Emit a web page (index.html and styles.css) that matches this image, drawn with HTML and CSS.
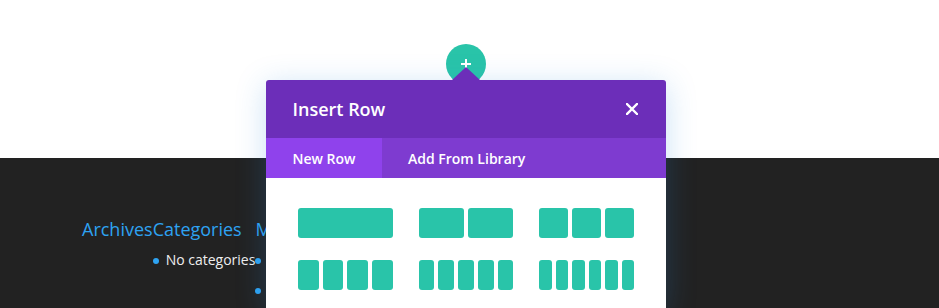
FILE: index.html
```html
<!DOCTYPE html>
<html lang="en">
<head>
<meta charset="utf-8">
<title>Insert Row</title>
<link rel="stylesheet" href="styles.css">
</head>
<body>
  <section class="hero"></section>
  <footer class="footer">
    <div class="widgets">
      <div class="widget">
        <h4 class="widget-title">Archives</h4>
        <ul class="widget-list"></ul>
      </div>
      <div class="widget">
        <h4 class="widget-title">Categories</h4>
        <ul class="widget-list">
          <li class="widget-item">No categories</li>
        </ul>
      </div>
      <div class="widget">
        <h4 class="widget-title">Meta</h4>
        <ul class="widget-list">
          <li class="widget-item">Log in</li>
          <li class="widget-item">Entries feed</li>
        </ul>
      </div>
    </div>
  </footer>

  <button class="add-btn" type="button" aria-label="Add row"><span class="plus"></span></button>

  <div class="modal">
    <div class="modal-header">
      <h2 class="modal-title">Insert Row</h2>
      <button class="modal-close" type="button" aria-label="Close">
        <svg width="12" height="12" viewBox="0 0 12 12"><path d="M1 1L11 11M11 1L1 11" stroke="#fff" stroke-width="2.4" stroke-linecap="square" fill="none"/></svg>
      </button>
    </div>
    <div class="modal-tabs">
      <div class="tab tab-active">New Row</div>
      <div class="tab">Add From Library</div>
    </div>
    <div class="modal-body">
      <div class="layout"><span class="col"></span></div>
      <div class="layout"><span class="col"></span><span class="col"></span></div>
      <div class="layout"><span class="col"></span><span class="col"></span><span class="col"></span></div>
      <div class="layout"><span class="col"></span><span class="col"></span><span class="col"></span><span class="col"></span></div>
      <div class="layout"><span class="col"></span><span class="col"></span><span class="col"></span><span class="col"></span><span class="col"></span></div>
      <div class="layout"><span class="col"></span><span class="col"></span><span class="col"></span><span class="col"></span><span class="col"></span><span class="col"></span></div>
    </div>
  </div>
</body>
</html>
```
FILE: styles.css
```css
* { box-sizing: border-box; }

html, body {
  margin: 0;
  padding: 0;
}

body {
  width: 939px;
  height: 308px;
  overflow: hidden;
  position: relative;
  font-family: "Open Sans", "Noto Sans", sans-serif;
  background: #fff;
}

.hero {
  height: 158px;
  background: #fff;
}

.footer {
  height: 150px;
  background: #222222;
  padding: 59px 0 0 82px;
}

.widgets {
  display: flex;
  align-items: flex-start;
}

.widget-title {
  margin: 0 0 4px;
  font-size: 18px;
  line-height: 24px;
  font-weight: 400;
  color: #2ea3f2;
  white-space: nowrap;
}

.widget-list {
  list-style: none;
  margin: 0;
  padding: 0;
}

.widget-item {
  display: flex;
  align-items: center;
  gap: 7px;
  font-size: 14px;
  line-height: 30px;
  color: #eeeeee;
  white-space: nowrap;
}

.widget-item::before {
  content: "";
  width: 6px;
  height: 6px;
  border-radius: 50%;
  background: #2ea3f2;
  flex: none;
  margin-top: 1px;
}

/* add button */
.add-btn {
  position: absolute;
  left: 446px;
  top: 44px;
  width: 40px;
  height: 40px;
  border: 0;
  padding: 0;
  border-radius: 50%;
  background: #29c4a9;
  display: flex;
  align-items: center;
  justify-content: center;
}

.plus {
  position: relative;
  width: 10px;
  height: 2px;
  background: #fff;
}

.plus::after {
  content: "";
  position: absolute;
  left: 4px;
  top: -4px;
  width: 2px;
  height: 10px;
  background: #fff;
}

/* modal */
.modal {
  position: absolute;
  left: 266px;
  top: 80px;
  width: 400px;
  height: 228px;
  background: #fff;
  border-radius: 3px 3px 0 0;
  box-shadow: 0 5px 30px rgba(43, 135, 218, 0.25);
}

.modal::before {
  content: "";
  position: absolute;
  left: 186px;
  top: -13px;
  border-left: 14px solid transparent;
  border-right: 14px solid transparent;
  border-bottom: 13px solid #6c2eb9;
}

.modal-header {
  height: 58px;
  background: #6c2eb9;
  border-radius: 3px 3px 0 0;
  display: flex;
  align-items: center;
  justify-content: space-between;
  padding: 0 28px 0 26.5px;
}

.modal-title {
  margin: 0;
  font-size: 18px;
  font-weight: 600;
  color: #fff;
}

.modal-close {
  border: 0;
  padding: 0;
  background: none;
  width: 12px;
  height: 12px;
  display: block;
}

.modal-close svg { display: block; }

.modal-tabs {
  height: 40px;
  display: flex;
  background: #7e3bd0;
}

.tab {
  padding: 0 26px 0 26.5px;
  display: flex;
  align-items: center;
  font-size: 14px;
  font-weight: 600;
  color: #fff;
}

.tab-active {
  background: #8f42ec;
}

.modal-body {
  display: grid;
  grid-template-columns: repeat(3, 1fr);
  column-gap: 26px;
  row-gap: 22px;
  padding: 30px 32px 0 32px;
}

.layout {
  display: flex;
  gap: 4px;
  height: 30px;
}

.col {
  flex: 1;
  background: #29c4a9;
  border-radius: 3px;
}
```
